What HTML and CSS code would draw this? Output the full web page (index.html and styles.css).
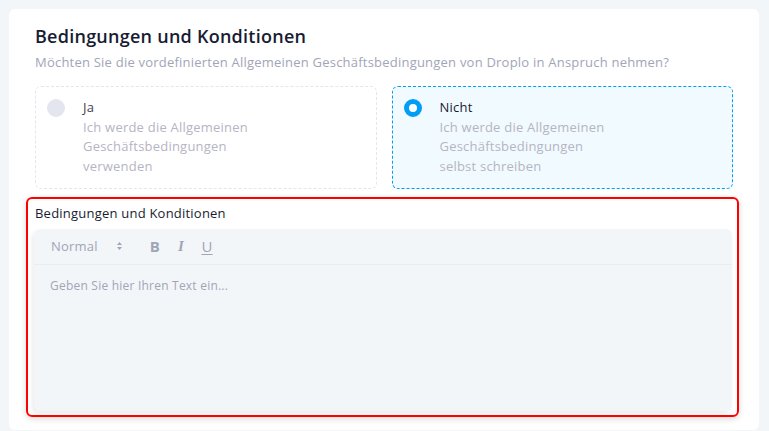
FILE: index.html
```html
<!DOCTYPE html>
<html lang="de">
<head>
    <meta charset="UTF-8">
    <meta name="viewport" content="width=device-width, initial-scale=1.0">
    <title>Bedingungen und Konditionen</title>
    <link rel="stylesheet" href="styles.css">
</head>
<body>
    <div class="card">
        <h2 class="title">Bedingungen und Konditionen</h2>
        <p class="subtitle">Möchten Sie die vordefinierten Allgemeinen Geschäftsbedingungen von Droplo in Anspruch nehmen?</p>

        <div class="options">
            <label class="option">
                <span class="radio"></span>
                <span class="option-text">
                    <span class="option-title">Ja</span>
                    <span class="option-desc">Ich werde die Allgemeinen<br>Geschäftsbedingungen<br>verwenden</span>
                </span>
            </label>
            <label class="option active">
                <span class="radio"></span>
                <span class="option-text">
                    <span class="option-title">Nicht</span>
                    <span class="option-desc">Ich werde die Allgemeinen<br>Geschäftsbedingungen<br>selbst schreiben</span>
                </span>
            </label>
        </div>

        <div class="terms">
            <div class="terms-label">Bedingungen und Konditionen</div>
            <div class="editor">
                <div class="toolbar">
                    <span class="picker">Normal
                        <svg class="caret" width="7" height="10" viewBox="0 0 7 10"><path d="M3.5 1 L6 4 H1 Z M3.5 9 L6 6 H1 Z" fill="#a1a5b7"/></svg>
                    </span>
                    <span class="tool tool-b">B</span>
                    <span class="tool tool-i">I</span>
                    <span class="tool tool-u">U</span>
                </div>
                <div class="editor-body">Geben Sie hier Ihren Text ein...</div>
            </div>
        </div>
    </div>
</body>
</html>
```

FILE: styles.css
```css
body {
    margin: 0;
    padding: 9px 10px 2px 9px;
    background-color: #f3f6f9;
    font-family: "Open Sans", "Liberation Sans", sans-serif;
    letter-spacing: 0.22px;
}
.card {
    background-color: #fff;
    border-radius: 6px;
    padding: 14px 26px 13px 26px;
}
.title {
    margin: 0;
    font-size: 18px;
    line-height: 27px;
    font-weight: 600;
    color: #181c32;
    letter-spacing: 0.25px;
}
.subtitle {
    margin: 2px 0 0 0;
    font-size: 13px;
    line-height: 20px;
    color: #a1a5b7;
}
.options {
    display: flex;
    gap: 15px;
    margin-top: 14px;
}
.option {
    flex: 1;
    display: flex;
    align-items: flex-start;
    gap: 18px;
    padding: 11px 11px 11px 11px;
    border: 1px dashed #e4e6ef;
    border-radius: 6px;
}
.option.active {
    border-color: #009ef7;
    background-color: #f1faff;
}
.radio {
    width: 18px;
    height: 18px;
    border-radius: 50%;
    background-color: #e4e6ef;
    margin-top: 1px;
    box-sizing: border-box;
    flex: none;
}
.option.active .radio {
    background-color: #fff;
    border: 5px solid #009ef7;
}
.option-text {
    display: flex;
    flex-direction: column;
    font-size: 13px;
    line-height: 19.7px;
}
.option-title {
    color: #3f4254;
}
.option.active .option-title {
    color: #181c32;
}
.option-desc {
    color: #b5b5c3;
}
.terms {
    margin: 8px -6px 0 -9px;
    border: 2px solid #f00;
    border-radius: 6px;
    padding: 4px 5px 4px 6px;
    box-shadow: 0 2px 6px rgba(0, 0, 0, 0.15);
}
.terms-label {
    padding-left: 1px;
    font-size: 13px;
    line-height: 20px;
    color: #181c32;
    margin-bottom: 6px;
}
.editor {
    background-color: #f3f6f9;
    border-radius: 6px;
    height: 182px;
    box-shadow: -2px 3px 5px rgba(0, 0, 0, 0.08);
}
.toolbar {
    display: flex;
    align-items: center;
    height: 35px;
    padding-left: 17px;
    border-bottom: 1px solid #e9edf1;
}
.picker {
    display: flex;
    align-items: center;
    width: 91px;
    justify-content: space-between;
    padding-right: 19px;
    box-sizing: border-box;
    font-size: 13px;
    color: #a1a5b7;
}
.caret {
    display: block;
}
.tool {
    width: 26px;
    font-size: 15px;
    color: #a1a5b7;
    text-align: center;
}
.tool-b {
    font-weight: 700;
}
.tool-i {
    font-family: "Liberation Serif", serif;
    font-style: italic;
    font-weight: 700;
}
.tool-u {
    text-decoration: underline;
    text-underline-offset: 2px;
}
.editor-body {
    padding: 12px 16px;
    font-size: 12px;
    line-height: 18px;
    color: #a1a5b7;
}
```
